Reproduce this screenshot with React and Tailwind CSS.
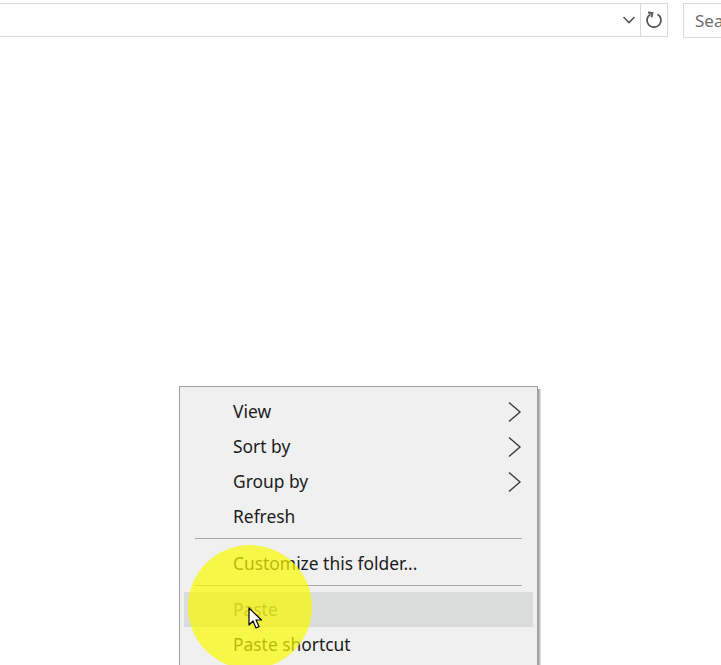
import React from 'react';

const font = { fontFamily: '"Noto Sans", "Open Sans", sans-serif' };

const Chevron = () => (
  <svg width="15" height="22" viewBox="0 0 15 22" className="mr-[11px]">
    <path d="M2 1.5 L13 11 L2 20.5" fill="none" stroke="#3a3a3a" strokeWidth="1.4" />
  </svg>
);

const MenuItem = ({ label, sub, hover, muted }) => (
  <div
    className={`flex items-center justify-between h-[35px] mx-[4px] pl-[49px] ${hover ? 'bg-[#dadbdb]' : ''}`}
  >
    <span className={`text-[17.4px] ${muted ? 'text-[#6d6d6d]' : 'text-[#1b1b1b]'}`}>{label}</span>
    {sub && <Chevron />}
  </div>
);

const Separator = ({ top, bottom }) => (
  <div className={`h-px bg-[#a8a8a8] ml-[15px] mr-[15px] ${top} ${bottom}`} />
);

const App = () => {
  return (
    <div className="relative w-[721px] h-[665px] bg-white overflow-hidden" style={font}>
      <div className="flex items-start pt-[3px] w-[760px]">
        <div className="shrink-0 flex items-center justify-end h-[34px] w-[641px] border-y border-r border-[#d9d9d9]">
          <svg width="14" height="10" viewBox="0 0 14 10" className="mr-[4px]">
            <path d="M1.5 2 L7 7.5 L12.5 2" fill="none" stroke="#555" strokeWidth="1.6" />
          </svg>
        </div>
        <div className="shrink-0 flex items-center justify-center h-[34px] w-[27px] border-y border-r border-[#d9d9d9]">
          <svg width="18" height="20" viewBox="0 0 18 20">
            <path d="M12.5 4.2 A7 7 0 1 1 5.5 4.2" fill="none" stroke="#555" strokeWidth="1.8" />
            <path d="M3 2.5 L7.5 3 L6.5 7.2" fill="none" stroke="#555" strokeWidth="1.8" />
          </svg>
        </div>
        <div className="shrink-0 ml-[15px] flex items-center h-[35px] w-[80px] border-y border-l border-[#d9d9d9] pl-[11px]">
          <span className="text-[17px] text-[#6d6d6d] whitespace-nowrap">Search</span>
        </div>
      </div>

      <div className="absolute left-[179px] top-[386px] w-[362px] h-[300px] flex">
        <div className="w-[359px] bg-[#f0f0f0] border border-[#a0a0a0] pt-[7px]">
          <MenuItem label="View" sub />
          <MenuItem label="Sort by" sub />
          <MenuItem label="Group by" sub />
          <MenuItem label="Refresh" />
          <Separator top="mt-[4px]" bottom="mb-[7px]" />
          <MenuItem label="Customize this folder..." />
          <Separator top="mt-[4px]" bottom="mb-[6px]" />
          <MenuItem label="Paste" hover muted />
          <MenuItem label="Paste shortcut" />
        </div>
        <div className="w-[3px] mt-[3px] bg-gradient-to-r from-[#9a9a9a] to-[#e8e8e8]" />
      </div>

      <div className="absolute left-[188px] top-[545px] w-[124px] h-[124px] rounded-full bg-[rgba(250,250,0,0.7)]" />

      <svg className="absolute left-[248px] top-[607px]" width="16" height="24" viewBox="0 0 16 24">
        <path d="M1 1 L1 18 L5 14 L8 21 L11 19.6 L8 13 L13.5 13 Z" fill="white" stroke="black" strokeWidth="1.2" strokeLinejoin="round" />
      </svg>
    </div>
  );
};

export default App;
